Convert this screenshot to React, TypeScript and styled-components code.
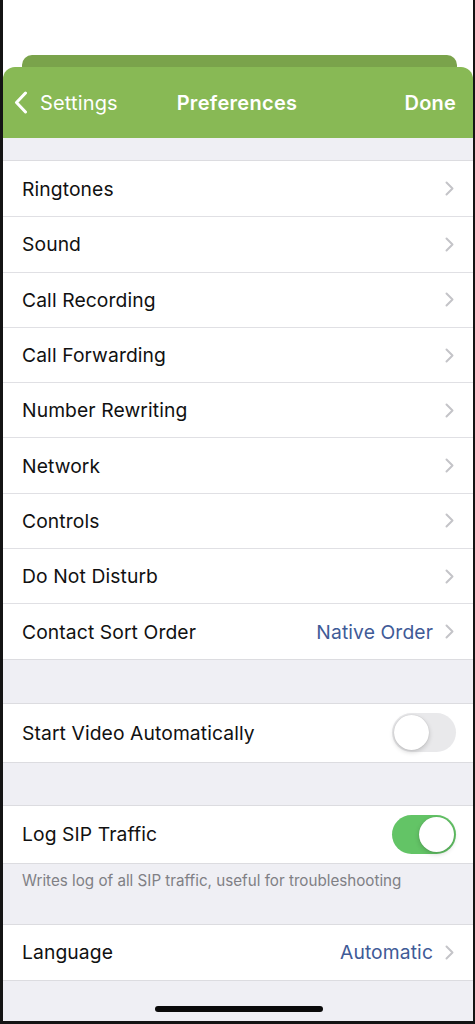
import React from "react";
import styled, { createGlobalStyle } from "styled-components";

const Global = createGlobalStyle`
  html, body { margin: 0; padding: 0; background: #ffffff; }
  body { font-family: Inter, "Noto Sans", "Liberation Sans", sans-serif; -webkit-font-smoothing: antialiased; }
  * { box-sizing: border-box; }
`;

const Frame = styled.div`
  width: 475px;
  height: 1024px;
  display: flex;
  flex-direction: column;
  background: #efeff4;
  border-left: 3px solid #141414;
  border-right: 2px solid #141414;
  border-bottom: 3px solid #141414;
  overflow: hidden;
  position: relative;
`;

const Top = styled.div`
  background: #ffffff;
  padding-top: 55px;
  display: flex;
  flex-direction: column;
`;

const BackSheet = styled.div`
  height: 12px;
  margin: 0 16px 0 19px;
  background: #7aa34b;
  border-radius: 10px 10px 0 0;
`;

const NavBar = styled.div`
  height: 71px;
  background: #88b955;
  border-radius: 12px 12px 0 0;
  display: grid;
  grid-template-columns: 1fr auto 1fr;
  align-items: center;
  padding: 0 17px 0 11px;
  color: #ffffff;
  font-size: 20px;
`;

const BackButton = styled.div`
  display: flex;
  align-items: center;
  gap: 12px;
  font-weight: 400;
  letter-spacing: 0.15px;
`;

const Title = styled.div`
  font-weight: 600;
  letter-spacing: 0.3px;
  margin-left: 4px;
`;

const Done = styled.div`
  justify-self: end;
  font-weight: 600;
  letter-spacing: 0.2px;
`;

const Gap = styled.div<{ $h: number }>`
  height: ${(p) => p.$h}px;
  flex-shrink: 0;
`;

const Group = styled.div`
  background: #ffffff;
  border-top: 1px solid #dcdce0;
  border-bottom: 1px solid #dcdce0;
`;

const Row = styled.div<{ $h: number }>`
  height: ${(p) => p.$h}px;
  display: flex;
  align-items: center;
  padding-left: 19px;
  position: relative;
  & + & {
    border-top: 1px solid #e0e0e4;
  }
`;

const RowInner = styled.div`
  flex: 1;
  height: 100%;
  display: flex;
  align-items: center;
  padding-right: 19px;
`;

const Label = styled.div`
  flex: 1;
  font-size: 19.3px;
  color: #111111;
  letter-spacing: 0.1px;
`;

const Value = styled.div`
  font-size: 19.3px;
  color: #3f5b97;
  margin-right: 12px;
  letter-spacing: 0.1px;
`;

const Footer = styled.div`
  padding: 7px 19px 0;
  font-size: 15.2px;
  color: #808085;
  height: 60px;
`;

const Switch = styled.div<{ $on: boolean }>`
  width: 64px;
  height: 39px;
  border-radius: 20px;
  background: ${(p) => (p.$on ? "#63c466" : "#e9e9eb")};
  position: relative;
  margin-right: -2px;
  &::after {
    content: "";
    position: absolute;
    top: 2px;
    left: ${(p) => (p.$on ? "27px" : "2px")};
    width: 35px;
    height: 35px;
    border-radius: 50%;
    background: #ffffff;
    box-shadow: 0 2px 5px rgba(0, 0, 0, 0.18), 0 0 1px rgba(0, 0, 0, 0.2);
  }
`;

const HomeBar = styled.div`
  position: absolute;
  left: 152px;
  bottom: 9px;
  width: 168px;
  height: 6px;
  border-radius: 3px;
  background: #0a0a0a;
`;

const Chevron = () => (
  <svg width="9" height="15" viewBox="0 0 9 15" fill="none">
    <path d="M1.5 1.5L7.5 7.5L1.5 13.5" stroke="#c4c4c8" strokeWidth="2" strokeLinecap="round" strokeLinejoin="round" />
  </svg>
);

const BackChevron = () => (
  <svg width="14" height="23" viewBox="0 0 14 23" fill="none">
    <path d="M11.5 2L2.5 11.5L11.5 21" stroke="#ffffff" strokeWidth="3" strokeLinecap="round" strokeLinejoin="round" />
  </svg>
);

const mainItems: { label: string; value?: string }[] = [
  { label: "Ringtones" },
  { label: "Sound" },
  { label: "Call Recording" },
  { label: "Call Forwarding" },
  { label: "Number Rewriting" },
  { label: "Network" },
  { label: "Controls" },
  { label: "Do Not Disturb" },
  { label: "Contact Sort Order", value: "Native Order" },
];

export default function App() {
  return (
    <>
      <Global />
      <Frame>
        <Top>
          <BackSheet />
          <NavBar>
            <BackButton>
              <BackChevron />
              <span>Settings</span>
            </BackButton>
            <Title>Preferences</Title>
            <Done>Done</Done>
          </NavBar>
        </Top>
        <Gap $h={22} />
        <Group>
          {mainItems.map((it) => (
            <Row key={it.label} $h={55.3}>
              <RowInner>
                <Label>{it.label}</Label>
                {it.value && <Value>{it.value}</Value>}
                <Chevron />
              </RowInner>
            </Row>
          ))}
        </Group>
        <Gap $h={43} />
        <Group>
          <Row $h={58}>
            <RowInner>
              <Label>Start Video Automatically</Label>
              <Switch $on={false} />
            </RowInner>
          </Row>
        </Group>
        <Gap $h={42} />
        <Group>
          <Row $h={57}>
            <RowInner>
              <Label>Log SIP Traffic</Label>
              <Switch $on={true} />
            </RowInner>
          </Row>
        </Group>
        <Footer>Writes log of all SIP traffic, useful for troubleshooting</Footer>
        <Group>
          <Row $h={55}>
            <RowInner>
              <Label>Language</Label>
              <Value>Automatic</Value>
              <Chevron />
            </RowInner>
          </Row>
        </Group>
        <HomeBar />
      </Frame>
    </>
  );
}
